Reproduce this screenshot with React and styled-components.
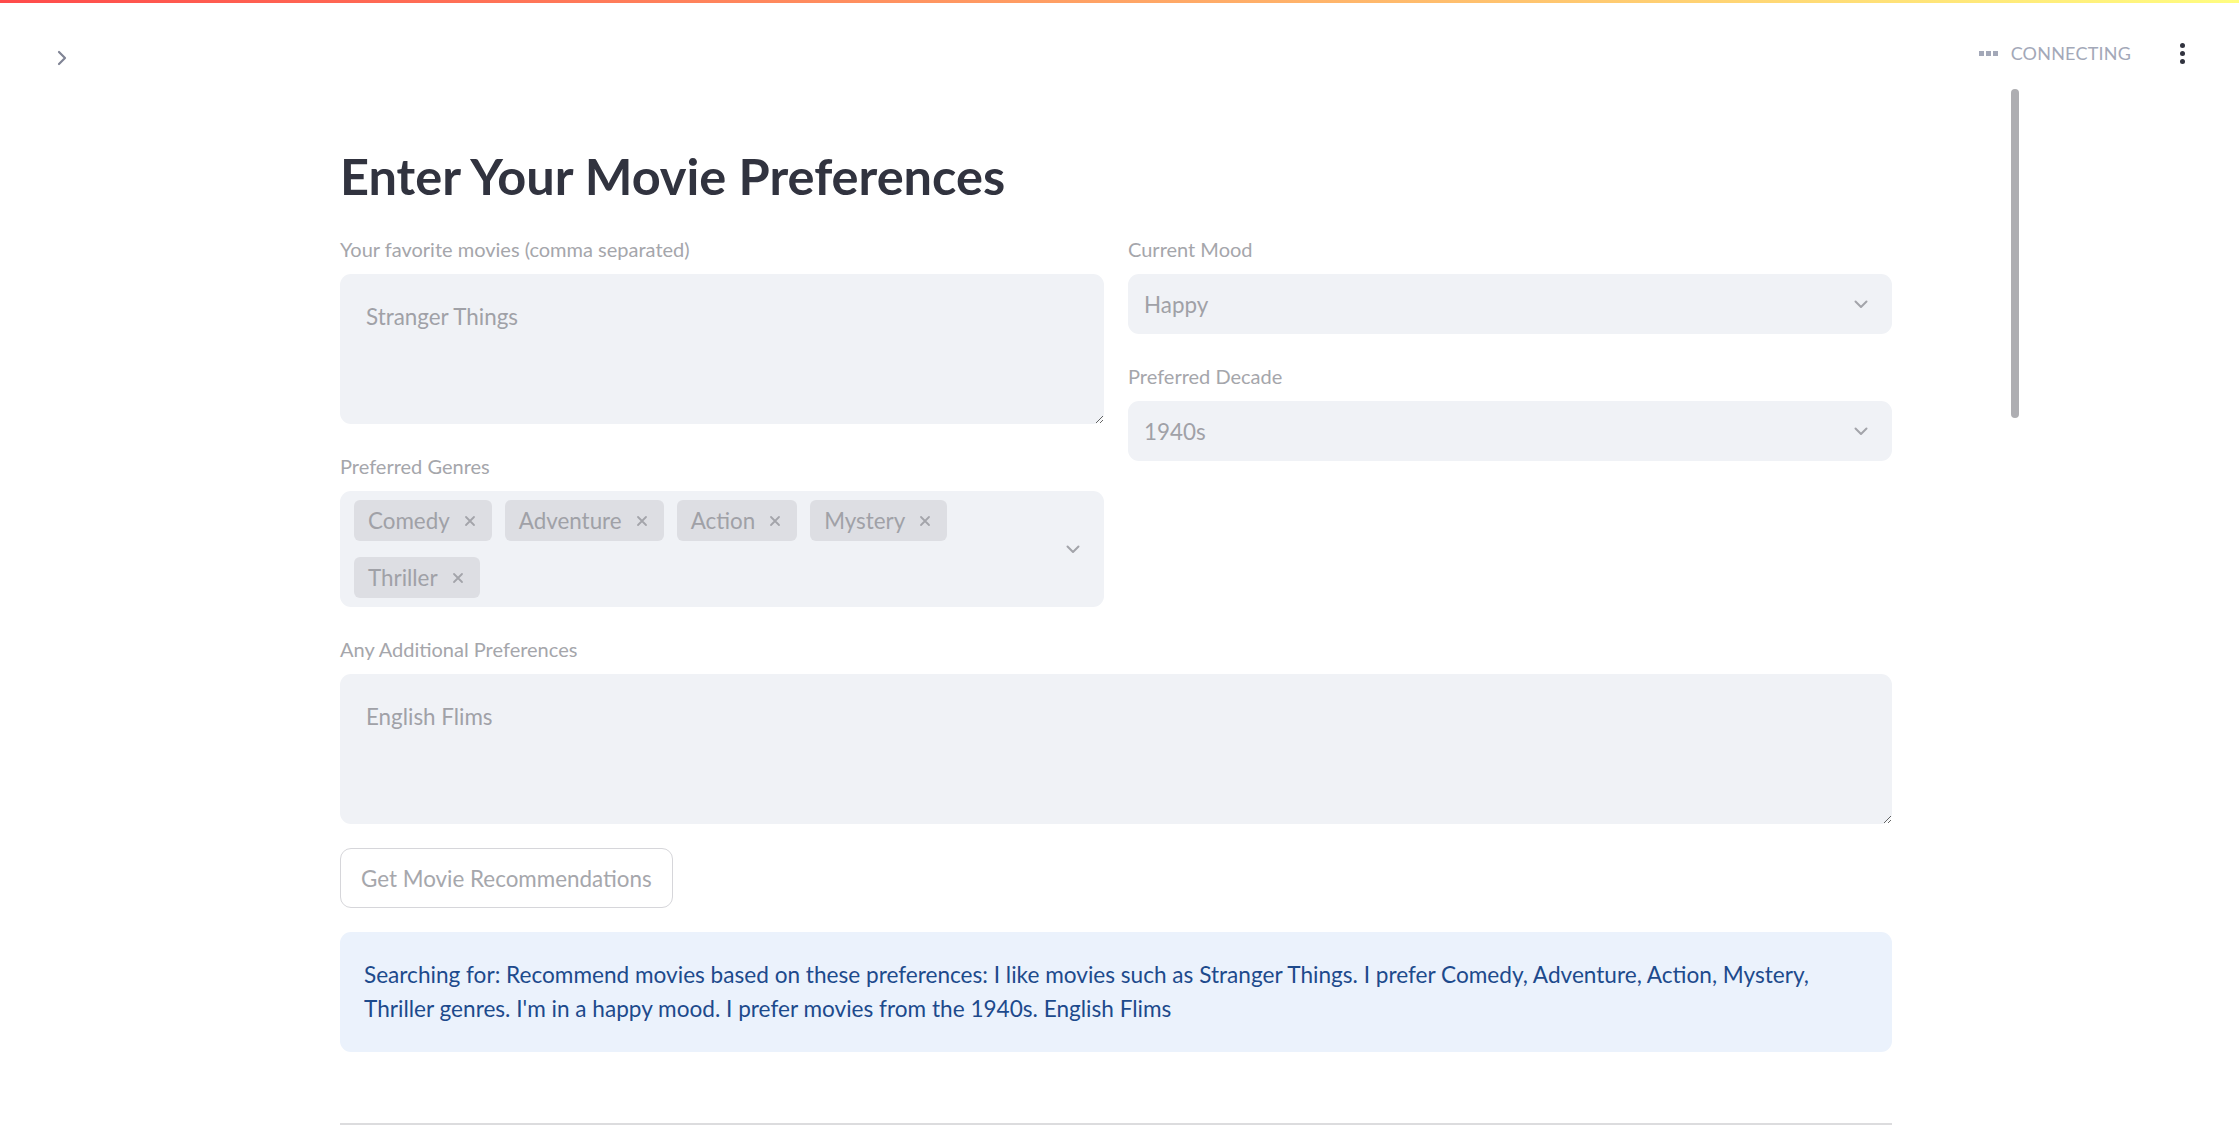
import React from 'react'
import styled, { createGlobalStyle } from 'styled-components'

const GlobalStyle = createGlobalStyle`
  html, body {
    margin: 0;
    padding: 0;
    background: #ffffff;
  }
  body {
    font-family: Lato, "Noto Sans", sans-serif;
    color: #31333f;
    overflow: hidden;
  }
`

const genres = ['Comedy', 'Adventure', 'Action', 'Mystery', 'Thriller']

const ChevronDown = () => (
  <svg width="14" height="9" viewBox="0 0 14 9" fill="none">
    <path d="M1.5 1.5l5.5 5.5 5.5-5.5" stroke="#a3a4aa" strokeWidth="2" strokeLinecap="round" strokeLinejoin="round" />
  </svg>
)

const Cross = () => (
  <svg width="12" height="12" viewBox="0 0 12 12" fill="none">
    <path d="M2 2l8 8M10 2l-8 8" stroke="#a3a4aa" strokeWidth="1.8" strokeLinecap="round" />
  </svg>
)

const App = () => {
  return (
    <Page>
      <GlobalStyle />
      <Decoration />
      <Header>
        <SidebarToggle>
          <svg width="12" height="16" viewBox="0 0 12 16" fill="none">
            <path d="M3 2l6 6-6 6" stroke="#808495" strokeWidth="2.2" strokeLinecap="round" strokeLinejoin="round" />
          </svg>
        </SidebarToggle>
        <HeaderRight>
          <Status>
            <Dots>
              <Dot />
              <Dot />
              <Dot />
            </Dots>
            <StatusText>Connecting</StatusText>
          </Status>
          <Kebab>
            <KebabDot />
            <KebabDot />
            <KebabDot />
          </Kebab>
        </HeaderRight>
      </Header>

      <Main>
        <Title>Enter Your Movie Preferences</Title>
        <Form>
          <Columns>
            <Column>
              <Field>
                <Label>Your favorite movies (comma separated)</Label>
                <TextArea readOnly defaultValue="Stranger Things" />
              </Field>
              <Field>
                <Label>Preferred Genres</Label>
                <MultiSelect>
                  <Tags>
                    {genres.map((g) => (
                      <Tag key={g}>
                        {g}
                        <Cross />
                      </Tag>
                    ))}
                  </Tags>
                  <ChevronDown />
                </MultiSelect>
              </Field>
            </Column>
            <Column>
              <Field>
                <Label>Current Mood</Label>
                <Select>
                  <span>Happy</span>
                  <ChevronDown />
                </Select>
              </Field>
              <Field>
                <Label>Preferred Decade</Label>
                <Select>
                  <span>1940s</span>
                  <ChevronDown />
                </Select>
              </Field>
            </Column>
          </Columns>

          <Field>
            <Label>Any Additional Preferences</Label>
            <TextArea readOnly defaultValue="English Flims" />
          </Field>

          <Button type="button">Get Movie Recommendations</Button>

          <Info>
            Searching for: Recommend movies based on these preferences: I like movies such as Stranger
            Things. I prefer Comedy, Adventure, Action, Mystery,
            <br />
            Thriller genres. I'm in a happy mood. I prefer movies from the 1940s. English Flims
          </Info>

          <Divider />
        </Form>
      </Main>

      <ScrollThumb />
    </Page>
  )
}

export default App

const Page = styled.div`
  position: relative;
  height: 100vh;
  overflow: hidden;
  background: #ffffff;
`

const Decoration = styled.div`
  height: 3px;
  background: linear-gradient(90deg, rgb(255, 75, 75), rgb(255, 253, 128));
`

const Header = styled.header`
  height: 85px;
  display: flex;
  justify-content: space-between;
  align-items: flex-start;
  padding: 0 50px 0 56px;
`

const SidebarToggle = styled.div`
  margin-top: 47px;
  display: flex;
`

const HeaderRight = styled.div`
  display: flex;
  align-items: center;
  gap: 45px;
  margin-top: 38px;
`

const Status = styled.div`
  display: flex;
  align-items: center;
  gap: 13px;
`

const Dots = styled.div`
  display: flex;
  gap: 2px;
`

const Dot = styled.span`
  width: 5px;
  height: 5px;
  background: #a3a8b8;
`

const StatusText = styled.span`
  font-size: 18px;
  line-height: 24px;
  text-transform: uppercase;
  color: #a3a8b8;
  letter-spacing: 0.2px;
`

const Kebab = styled.div`
  display: flex;
  flex-direction: column;
  gap: 3px;
  padding: 0 4px;
`

const KebabDot = styled.span`
  width: 5px;
  height: 5px;
  border-radius: 50%;
  background: #31333f;
`

const Main = styled.main`
  width: 1552px;
  margin-left: 340px;
`

const Title = styled.h2`
  margin: 58px 0 0;
  font-size: 50.5px;
  line-height: 60px;
  font-weight: 700;
  color: #31333f;
  letter-spacing: 0;
`

const Form = styled.div`
  margin-top: 25px;
  display: flex;
  flex-direction: column;
  align-items: flex-start;
  gap: 24px;
`

const Columns = styled.div`
  width: 100%;
  display: grid;
  grid-template-columns: 1fr 1fr;
  column-gap: 24px;
  align-items: start;
`

const Column = styled.div`
  display: flex;
  flex-direction: column;
  gap: 24px;
`

const Field = styled.div`
  width: 100%;
  display: flex;
  flex-direction: column;
`

const Label = styled.label`
  font-size: 20px;
  line-height: 36px;
  margin-bottom: 7px;
  color: #a5a6ab;
`

const TextArea = styled.textarea`
  box-sizing: border-box;
  width: 100%;
  height: 150px;
  padding: 28px 26px 26px;
  border: none;
  border-radius: 11px;
  background: #f0f2f6;
  font-family: Lato, "Noto Sans", sans-serif;
  font-size: 22.4px;
  line-height: 30px;
  color: #a0a1a7;
  resize: vertical;
  outline: none;
`

const Select = styled.div`
  box-sizing: border-box;
  height: 60px;
  display: flex;
  align-items: center;
  justify-content: space-between;
  padding: 0 24px 0 16px;
  border-radius: 11px;
  background: #f0f2f6;
  font-size: 22.4px;
  color: #a0a1a7;
`

const MultiSelect = styled.div`
  box-sizing: border-box;
  min-height: 116px;
  display: flex;
  align-items: center;
  padding: 9px 24px 9px 14px;
  border-radius: 11px;
  background: #f0f2f6;
`

const Tags = styled.div`
  flex: 1;
  display: flex;
  flex-wrap: wrap;
  column-gap: 13px;
  row-gap: 16px;
  padding-right: 40px;
`

const Tag = styled.span`
  height: 41px;
  display: inline-flex;
  align-items: center;
  gap: 14px;
  padding: 0 16px 0 14px;
  border-radius: 6px;
  background: #dddee3;
  font-size: 22.4px;
  color: #a0a1a7;
`

const Button = styled.button`
  box-sizing: border-box;
  height: 60px;
  padding: 0 20px;
  border: 1px solid #d6d6da;
  border-radius: 11px;
  background: #ffffff;
  font-family: Lato, "Noto Sans", sans-serif;
  font-size: 22.4px;
  color: #a6a7ac;
`

const Info = styled.div`
  box-sizing: border-box;
  width: 100%;
  padding: 26px 26px 26px 24px;
  border-radius: 11px;
  background: #ebf2fc;
  font-size: 22.6px;
  line-height: 34px;
  color: #1d4a8c;
`

const Divider = styled.hr`
  width: 100%;
  margin: 47px 0 0;
  border: none;
  border-top: 2px solid #dcdcde;
`

const ScrollThumb = styled.div`
  position: absolute;
  top: 89px;
  left: 2011px;
  width: 8px;
  height: 329px;
  border-radius: 4px;
  background: #aeaeb2;
`
